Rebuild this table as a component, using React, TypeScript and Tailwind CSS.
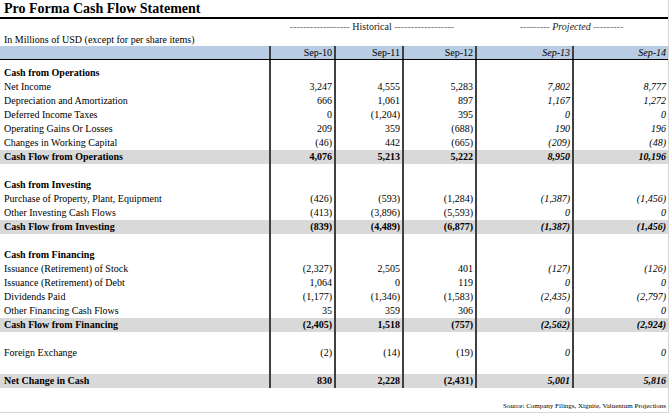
import React from "react";

type Row =
  | { kind: "section"; label: string }
  | { kind: "line" | "total"; label: string; vals: string[] }
  | { kind: "blank" };

const rows: Row[] = [
  { kind: "section", label: "Cash from Operations" },
  { kind: "line", label: "Net Income", vals: ["3,247", "4,555", "5,283", "7,802", "8,777"] },
  { kind: "line", label: "Depreciation and Amortization", vals: ["666", "1,061", "897", "1,167", "1,272"] },
  { kind: "line", label: "Deferred Income Taxes", vals: ["0", "(1,204)", "395", "0", "0"] },
  { kind: "line", label: "Operating Gains Or Losses", vals: ["209", "359", "(688)", "190", "196"] },
  { kind: "line", label: "Changes in Working Capital", vals: ["(46)", "442", "(665)", "(209)", "(48)"] },
  { kind: "total", label: "Cash Flow from Operations", vals: ["4,076", "5,213", "5,222", "8,950", "10,196"] },
  { kind: "blank" },
  { kind: "section", label: "Cash from Investing" },
  { kind: "line", label: "Purchase of Property, Plant, Equipment", vals: ["(426)", "(593)", "(1,284)", "(1,387)", "(1,456)"] },
  { kind: "line", label: "Other Investing Cash Flows", vals: ["(413)", "(3,896)", "(5,593)", "0", "0"] },
  { kind: "total", label: "Cash Flow from Investing", vals: ["(839)", "(4,489)", "(6,877)", "(1,387)", "(1,456)"] },
  { kind: "blank" },
  { kind: "section", label: "Cash from Financing" },
  { kind: "line", label: "Issuance (Retirement) of Stock", vals: ["(2,327)", "2,505", "401", "(127)", "(126)"] },
  { kind: "line", label: "Issuance (Retirement) of Debt", vals: ["1,064", "0", "119", "0", "0"] },
  { kind: "line", label: "Dividends Paid", vals: ["(1,177)", "(1,346)", "(1,583)", "(2,435)", "(2,797)"] },
  { kind: "line", label: "Other Financing Cash Flows", vals: ["35", "359", "306", "0", "0"] },
  { kind: "total", label: "Cash Flow from Financing", vals: ["(2,405)", "1,518", "(757)", "(2,562)", "(2,924)"] },
  { kind: "blank" },
  { kind: "line", label: "Foreign Exchange", vals: ["(2)", "(14)", "(19)", "0", "0"] },
  { kind: "blank" },
  { kind: "total", label: "Net Change in Cash", vals: ["830", "2,228", "(2,431)", "5,001", "5,816"] },
];

const years = ["Sep-10", "Sep-11", "Sep-12", "Sep-13", "Sep-14"];
const grid = "grid grid-cols-[269px_65px_68px_73px_97px_96px]";
const cell = "border-l-2 border-[#404040] text-right pr-[2px] whitespace-nowrap";

function TableRow({ row }: { row: Row }) {
  const total = row.kind === "total";
  const label = row.kind === "blank" ? "" : row.label;
  const vals = row.kind === "line" || row.kind === "total" ? row.vals : ["", "", "", "", ""];
  return (
    <div className={`${grid} h-[14px] leading-[14px] ${total ? "bg-[#d9d9d9] font-bold" : ""}`}>
      <div className={`pl-[4px] whitespace-nowrap ${row.kind === "section" ? "font-bold" : ""}`}>{label}</div>
      {vals.map((v, i) => (
        <div key={i} className={`${cell} ${i >= 3 ? "italic" : ""}`}>
          {v}
        </div>
      ))}
    </div>
  );
}

export default function App() {
  return (
    <div className="w-[670px] h-[414px] bg-white text-black font-['Liberation_Serif','Times_New_Roman',serif]">
      <div className="w-[669px] h-[413px] border-r border-b border-[#d6d6d6] flex flex-col">
        <div className="h-[17px] pl-[4px] text-[14px] leading-[17px] font-bold">Pro Forma Cash Flow Statement</div>
        <div className="h-[2px] w-[668px] bg-black" />

        {/* period labels */}
        <div className={`${grid} h-[15px] leading-[15px] text-[10px] text-[#222]`}>
          <div />
          <div className="col-span-3 text-center whitespace-nowrap">
            <span className="text-[#777]">------------------</span> Historical{" "}
            <span className="text-[#777]">------------------</span>
          </div>
          <div className="col-span-2 text-center whitespace-nowrap">
            <span className="text-[#777]">---------</span> <span className="italic">Projected</span>{" "}
            <span className="text-[#777]">---------</span>
          </div>
        </div>
        <div className="h-[12px] leading-[12px] pl-[4px] text-[10px]">In Millions of USD (except for per share items)</div>

        <div className="text-[10px]">
          <div className={`${grid} h-[14px] leading-[13px] bg-[#b8cce4] border-b border-black`}>
            <div />
            {years.map((y, i) => (
              <div key={y} className={`${cell} ${i >= 3 ? "italic" : ""}`}>
                {y}
              </div>
            ))}
          </div>
          <div className={`${grid} h-[6px]`}>
            <div />
            {years.map((y) => (
              <div key={y} className={cell} />
            ))}
          </div>
          {rows.map((r, i) => (
            <TableRow key={i} row={r} />
          ))}
        </div>

        <div className="mt-auto h-[16px] pt-[4px] leading-[12px] pr-[2px] text-right text-[7px] whitespace-nowrap">
          Source: Company Filings, Xignite, Valuentum Projections
        </div>
      </div>
    </div>
  );
}
